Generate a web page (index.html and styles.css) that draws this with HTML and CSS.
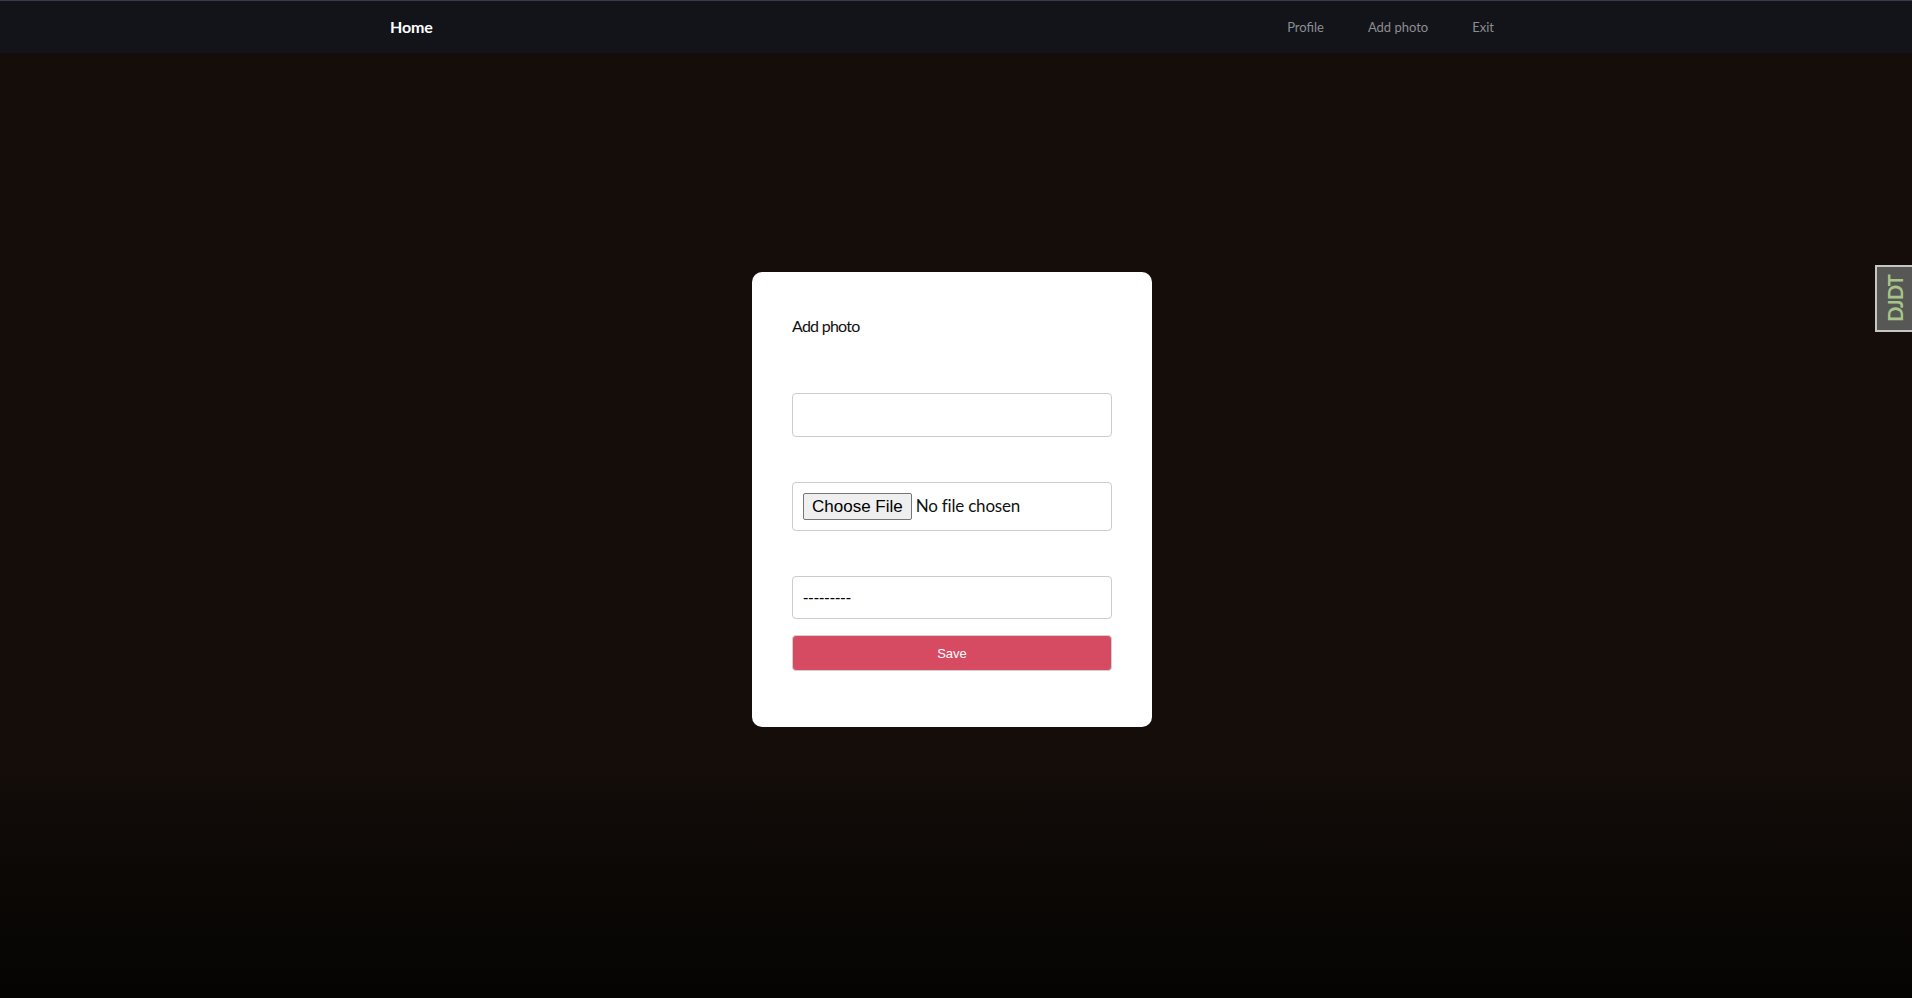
FILE: index.html
```html
<!DOCTYPE html>
<html lang="en">
<head>
<meta charset="utf-8">
<title>Add photo</title>
<link rel="stylesheet" href="styles.css">
</head>
<body>
<nav class="navbar">
  <div class="nav-inner">
    <a class="brand" href="#">Home</a>
    <ul class="nav-links">
      <li><a href="#">Profile</a></li>
      <li><a href="#">Add photo</a></li>
      <li><a href="#">Exit</a></li>
    </ul>
  </div>
</nav>
<main class="page">
  <form class="card">
    <h2 class="card-title">Add photo</h2>
    <input class="field text-field" type="text">
    <div class="field file-field"><input class="file-input" type="file"></div>
    <select class="field select-field"><option>---------</option></select>
    <button class="save-btn" type="button">Save</button>
  </form>
</main>
<div class="djdt-handle"><span class="djdt-text">DJDT</span></div>
</body>
</html>
```

FILE: styles.css
```css
* { box-sizing: border-box; }
html, body { margin: 0; padding: 0; }
body {
  min-height: 998px;
  background: linear-gradient(to bottom, #140d09 0%, #140d09 77%, #0b0806 88%, #060403 100%);
  font-family: "Lato", "Noto Sans", sans-serif;
}
.navbar {
  height: 53px;
  background: #131419;
  border-top: 1px solid #383b4c;
}
.nav-inner {
  height: 52px;
  display: flex;
  align-items: center;
  padding-left: 390px;
  padding-right: 418px;
  padding-bottom: 1px;
}
.brand {
  color: #ffffff;
  font-weight: 700;
  font-size: 16px;
  line-height: 20px;
  text-decoration: none;
  letter-spacing: -0.1px;
}
.nav-links {
  list-style: none;
  margin: 0 0 0 auto;
  padding: 0;
  display: flex;
  gap: 44px;
  line-height: 18px;
}
.nav-links a {
  color: #8b8d92;
  font-size: 13px;
  text-decoration: none;
}
.page {
  display: flex;
  justify-content: center;
  padding-top: 219px;
  padding-right: 8px;
}
.card {
  width: 400px;
  background: #ffffff;
  border-radius: 10px;
  padding: 42px 40px 56px;
  display: flex;
  flex-direction: column;
}
.card-title {
  margin: 0;
  font-size: 16px;
  line-height: 24px;
  font-weight: 400;
  color: #111;
  letter-spacing: -0.75px;
}
.field {
  width: 320px;
  border: 1px solid #cccccc;
  border-radius: 4px;
  background: #fff;
}
.text-field {
  margin-top: 55px;
  height: 44px;
  padding: 0 10px;
  font-size: 16px;
}
.file-field {
  margin-top: 45px;
  height: 49px;
  padding: 10px;
  display: flex;
  align-items: center;
}
.file-input {
  font-family: "Lato", sans-serif;
  font-size: 17px;
  color: #111;
  letter-spacing: -0.2px;
}
.file-input::file-selector-button {
  font-family: "Liberation Sans", Arial, sans-serif;
  font-size: 17px;
  letter-spacing: 0;
  height: 27px;
  padding: 0 8px;
  margin-right: 4px;
  background: #efefef;
  border: 1px solid #767676;
  border-radius: 2px;
  color: #000;
}
.select-field {
  margin-top: 45px;
  height: 43px;
  padding: 0 10px;
  appearance: none;
  -webkit-appearance: none;
  font-family: "Liberation Sans", Arial, sans-serif;
  font-size: 16px;
  color: #000;
}
.save-btn {
  margin-top: 16px;
  width: 320px;
  height: 36px;
  border: 1px solid #d0d0d0;
  border-radius: 4px;
  background: #d64a62;
  color: #ffffff;
  font-family: "Liberation Sans", Arial, sans-serif;
  font-size: 13px;
}
.djdt-handle {
  position: fixed;
  top: 265px;
  right: 0;
  width: 37px;
  height: 67px;
  background: #575755;
  border: 2px solid #c6c6c4;
  border-right: none;
  display: flex;
  align-items: center;
  justify-content: center;
}
.djdt-text {
  writing-mode: vertical-rl;
  transform: rotate(180deg);
  color: #a6c58a;
  font-family: "Lato", sans-serif;
  font-weight: 700;
  font-size: 20px;
  letter-spacing: -0.8px;
  line-height: 1;
}
```
